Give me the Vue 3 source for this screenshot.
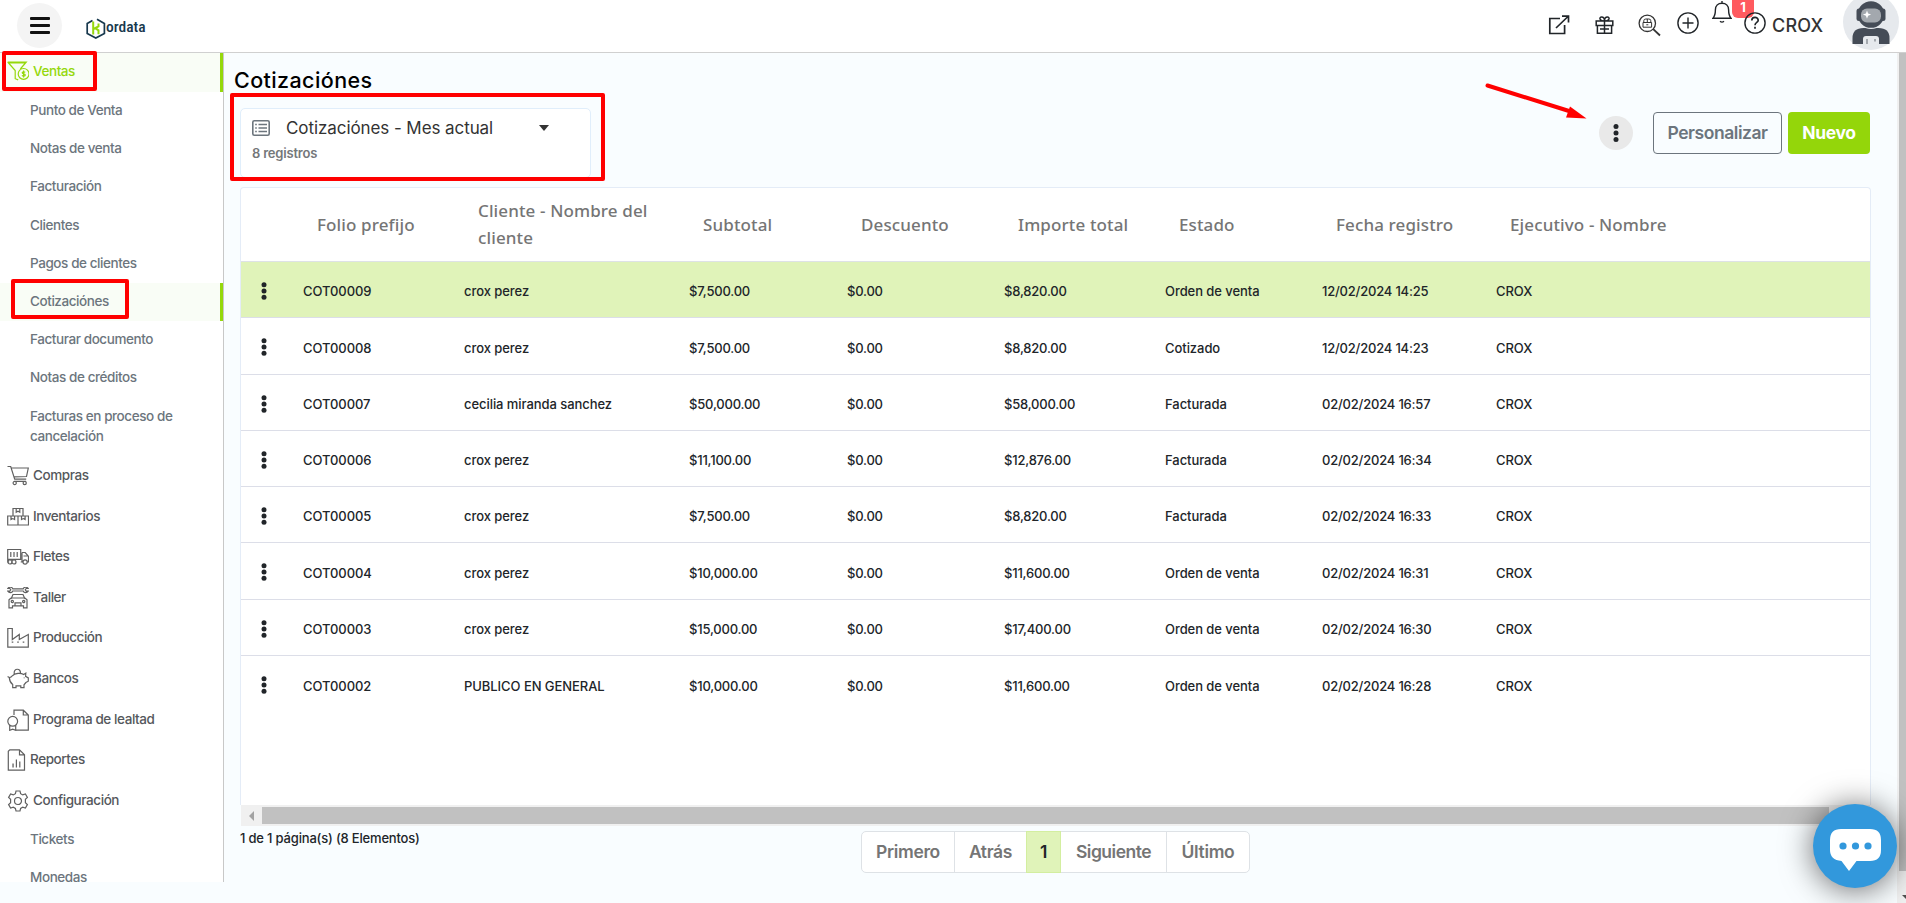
<script setup>
import { ref } from 'vue'

// stroke paths on a 22x22 grid
const icons = {
  ventas: 'M.7 1h18.6l-6 7M.7 1l7.5 8.5v8.2l3 1.2M1.5 2h17M22 12.9a5.4 5.4 0 1 1-10.8 0a5.4 5.4 0 1 1 10.8 0M18.2 11.3c-.5-.7-3-.9-3 .4c0 1.5 3.1.8 3.1 2.4c0 1.3-2.7 1.1-3.3.2M16.6 9.5v7',
  compras: 'M.5 1.5h3.2l4 12.7h11.5M4.5 3h16.8l-1.8 8.5l-12.5.4M7 16.3h12M9.3 18a1.6 1.6 0 1 1-3.2 0a1.6 1.6 0 1 1 3.2 0M19.3 18a1.6 1.6 0 1 1-3.2 0a1.6 1.6 0 1 1 3.2 0',
  inventarios: 'M.7 10h10.3v9H.7zM11 10h10.5v9H11zM6 2.5h10v7.5H6zM9.2 2.5v3.8l1.8-1l1.8 1v-3.8M4 10v3.6l1.8-1l1.8 1V10M14.5 10v3.6l1.8-1l1.8 1V10',
  fletes: 'M.7 3.5h13v9.8H.7zM3.8 6v5M7 6v5M10.2 6v5M.7 13.3v2.7h1.5M15.5 16h-1.8M15 6.5h3.2l3.3 3.8V16h-1M15 6.5V16M16.5 10h5M4.9 16a2 2 0 1 1-4 0a2 2 0 1 1 4 0M9 16a2 2 0 1 1-4 0a2 2 0 1 1 4 0M20.2 16a2.1 2.1 0 1 1-4.2 0a2.1 2.1 0 1 1 4.2 0',
  taller: 'M.8 1.5h2l1 1.3l-1 1.4h-2c1.4 2 4.2 1.8 5-.2h10.4c.8 2 3.6 2.2 5 .2h-2l-1-1.4l1-1.3h2c-1.4-2-4.2-1.7-5 .3H5.8c-.8-2-3.6-2.3-5-.3zM4 12l2-4.5h10L18 12M2 12.8l2-1.8h14l2 1.8v8h-3.5v-2h-11v2H2zM8 18.5v-2.7h6v2.7M6.4 14.5a1.1 1.1 0 1 1-2.2 0a1.1 1.1 0 1 1 2.2 0M17.8 14.5a1.1 1.1 0 1 1-2.2 0a1.1 1.1 0 1 1 2.2 0',
  produccion: 'M.8 1.5h4.5v11l7-5v5l9-5v12.7H.8zM4.7 15.2h1.6M10.2 15.2h1.6M15.7 15.2h1.6',
  bancos: 'M2.3 9.6c1.4 0 2.3-.5 3-1.8C8 4.8 14 4.8 16.7 6.5l2.1-1.4l-.2 3.2l2.7 1.6v3.3l-2.4 1.3l-1.9 2.3v2.8h-3.2v-1.8H9v1.8H5.7v-3.1C3.7 15 2.5 13 2.3 9.6L.6 8.5M7.2 5.8c-.9-6 7-6 6.2-.4M17.2 9.5v.8',
  lealtad: 'M7 6V1.2h9.3l5 4.8v15.2H8.2M16.3 1.2V6h5M10.6 12.3a4.9 4.9 0 1 1-9.8 0a4.9 4.9 0 1 1 9.8 0M2.7 16.5v4.8l3-1.2l3 1.2v-4.8',
  reportes: 'M2.8.8h9.7l5 5v15.4H1.3V2.3zM12.5.8v5h5M6 18.5v-4M9.4 18.5V10.5M12.8 18.5v-6M6.1 14.5v4',
  config: 'M9 1h4l.6 2.7l2.1 1.2l2.7-.9l2 3.4l-2 1.9v3.4l2 1.9l-2 3.4l-2.7-.8l-2.1 1.2L13 21H9l-.6-2.6l-2.1-1.2l-2.7.8l-2-3.4l2-1.9V9.3l-2-1.9l2-3.4l2.7.9l2.1-1.2zM14.5 11a3.5 3.5 0 1 1-7 0a3.5 3.5 0 1 1 7 0',
}

const menu = [
  { label: 'Ventas', icon: 'ventas', active: true },
  { label: 'Punto de Venta' },
  { label: 'Notas de venta' },
  { label: 'Facturación' },
  { label: 'Clientes' },
  { label: 'Pagos de clientes' },
  { label: 'Cotizaciónes', active: true },
  { label: 'Facturar documento' },
  { label: 'Notas de créditos' },
  { label: 'Facturas en proceso de cancelación' },
  { label: 'Compras', icon: 'compras' },
  { label: 'Inventarios', icon: 'inventarios' },
  { label: 'Fletes', icon: 'fletes' },
  { label: 'Taller', icon: 'taller' },
  { label: 'Producción', icon: 'produccion' },
  { label: 'Bancos', icon: 'bancos' },
  { label: 'Programa de lealtad', icon: 'lealtad' },
  { label: 'Reportes', icon: 'reportes' },
  { label: 'Configuración', icon: 'config' },
  { label: 'Tickets' },
  { label: 'Monedas' },
]

const columns = ['Folio prefijo', 'Cliente - Nombre del cliente', 'Subtotal', 'Descuento', 'Importe total', 'Estado', 'Fecha registro', 'Ejecutivo - Nombre']

const rows = [
  ['COT00009', 'crox perez', '$7,500.00', '$0.00', '$8,820.00', 'Orden de venta', '12/02/2024 14:25', 'CROX'],
  ['COT00008', 'crox perez', '$7,500.00', '$0.00', '$8,820.00', 'Cotizado', '12/02/2024 14:23', 'CROX'],
  ['COT00007', 'cecilia miranda sanchez', '$50,000.00', '$0.00', '$58,000.00', 'Facturada', '02/02/2024 16:57', 'CROX'],
  ['COT00006', 'crox perez', '$11,100.00', '$0.00', '$12,876.00', 'Facturada', '02/02/2024 16:34', 'CROX'],
  ['COT00005', 'crox perez', '$7,500.00', '$0.00', '$8,820.00', 'Facturada', '02/02/2024 16:33', 'CROX'],
  ['COT00004', 'crox perez', '$10,000.00', '$0.00', '$11,600.00', 'Orden de venta', '02/02/2024 16:31', 'CROX'],
  ['COT00003', 'crox perez', '$15,000.00', '$0.00', '$17,400.00', 'Orden de venta', '02/02/2024 16:30', 'CROX'],
  ['COT00002', 'PUBLICO EN GENERAL', '$10,000.00', '$0.00', '$11,600.00', 'Orden de venta', '02/02/2024 16:28', 'CROX'],
]
const selected = ref(0)
</script>

<template>
  <div class="app">
    <header class="topbar">
      <button class="burger"><i></i><i></i><i></i></button>
      <div class="logo">
        <svg width="20" height="21" viewBox="0 0 20 21" fill="none">
          <path d="M6.5 2.4L1.2 5.6v9.8l8.6 4.6l8.6-4.6V5.6L11 1.2" stroke="#17384d" stroke-width="1.7" />
          <path d="M7.2 3.5v13M12.5 5.5v3l-5 2.5M9.5 10.3l3 2v4" stroke="#95d80c" stroke-width="2" />
        </svg>
        <span>ordata</span>
      </div>
      <div class="tools">
        <svg class="t-link" width="22" height="20" viewBox="0 0 22 20" fill="none" stroke="#212529" stroke-width="1.7">
          <path d="M12 3.5H1.8v15h14.8V10M8 13L20 1.5M14 1.1h6.5v6.4" />
        </svg>
        <svg class="t-gift" width="19" height="19" viewBox="0 0 19 19" fill="none" stroke="#212529" stroke-width="1.5">
          <path d="M1.2 5h16.6v4.5H1.2zM2.4 9.5v7.8h14.2V9.5M9.5 5v12.3M9.5 5C4 5 4 1 6.6 1C8.6 1 9.5 3 9.5 5C9.5 3 10.4 1 12.4 1C15 1 15 5 9.5 5M5 13h9" />
        </svg>
        <svg class="t-find" width="23" height="23" viewBox="0 0 23 23" fill="none" stroke="#333" stroke-width="1.3">
          <circle cx="9.3" cy="9.3" r="8.2" />
          <path d="M15.2 15.2l6.8 6.3" stroke-width="1.8" />
          <path d="M5 8.5h8.6v4.7H5zM5.8 8.5V6.7q0-1.7 2-1.7h3q2 0 2 1.7v1.8M9.3 5v3.5M8.3 10.8h2" stroke-width="1" />
        </svg>
        <svg class="t-plus" width="22" height="22" viewBox="0 0 22 22" fill="none" stroke="#212529" stroke-width="1.4">
          <circle cx="11" cy="11" r="10.1" /><path d="M11 5.5v11M5.5 11h11" />
        </svg>
        <div class="bell">
          <svg width="20" height="24" viewBox="0 0 20 24" fill="none" stroke="#212529" stroke-width="1.4">
            <path d="M1 18.2c1.8-2 2.4-3.6 2.4-8.4C3.4 5.8 6 3.2 10 3.2s6.6 2.6 6.6 6.6c0 4.8.6 6.4 2.4 8.4zM10 3V1M8 21.3q2 1.6 4 0" />
          </svg>
          <span class="badge">1</span>
        </div>
        <svg class="t-help" width="22" height="22" viewBox="0 0 22 22" fill="none" stroke="#212529">
          <circle cx="11" cy="11" r="10.1" stroke-width="1.4" />
          <path d="M7.8 8.5C7.8 4.3 14.2 4.4 14.2 8.2C14.2 10.5 11 10.3 11 13.2M11 14.8v2" stroke-width="1.7" />
        </svg>
        <span class="user">CROX</span>
        <svg class="avatar" width="56" height="50" viewBox="0 0 56 50">
          <circle cx="28" cy="22" r="28" fill="#e6e9ed" />
          <path d="M9.5 44V38q0-10 11-10h15q11 0 11 10v6z" fill="#454c57" />
          <circle cx="28" cy="14.5" r="14.5" fill="#e6e9ed" />
          <circle cx="28" cy="14.5" r="13.3" fill="#454c57" />
          <rect x="13.5" y="8.5" width="29" height="12.5" rx="2.5" fill="#454c57" />
          <rect x="18" y="8.5" width="20" height="14" rx="6" fill="#a3a8ae" />
          <path d="M24 10.5l1.1 3l3 1.1l-3 1.1l-1.1 3l-1.1-3l-3-1.1l3-1.1z" fill="#fff" />
          <path d="M20 44v-5q0-3 3-3h10q3 0 3 3v5z" fill="#e6e9ed" />
          <path d="M24 39v5M32 39v2.5" stroke="#a3a8ae" stroke-width="2" />
        </svg>
      </div>
    </header>

    <div class="body">
      <nav class="sidebar">
        <a v-for="item in menu" :key="item.label" :class="['item', item.icon ? 'group' : 'sub', { active: item.active }]">
          <svg v-if="item.icon" :width="item.icon === 'reportes' ? 19 : 22" height="22" fill="none" stroke="currentColor" stroke-width="1.2">
            <path :d="icons[item.icon]" />
          </svg>
          <span>{{ item.label }}</span>
        </a>
      </nav>

      <main class="content">
        <h1>Cotizaciónes</h1>
        <div class="head">
          <div class="view">
            <div class="view-row">
              <svg width="18" height="16" viewBox="0 0 18 16" fill="none" stroke="#6c757d">
                <rect x=".8" y=".8" width="16.4" height="14.4" rx="1.5" stroke-width="1.6" />
                <path d="M6.5 4.5H15M6.5 8H15M6.5 11.5H15M3.2 4.5h1.6M3.2 8h1.6M3.2 11.5h1.6" stroke-width="1.4" />
              </svg>
              <span>Cotizaciónes - Mes actual</span>
              <i class="caret"></i>
            </div>
            <small>8 registros</small>
          </div>
          <div class="actions">
            <button class="more">
              <svg width="6" height="18" fill="#212529"><circle cx="3" cy="2.6" r="2.5" /><circle cx="3" cy="9" r="2.5" /><circle cx="3" cy="15.4" r="2.5" /></svg>
            </button>
            <button class="btn outline">Personalizar</button>
            <button class="btn primary">Nuevo</button>
          </div>
        </div>

        <div class="table">
          <div class="tr th">
            <span></span>
            <span v-for="c in columns" :key="c">{{ c }}</span>
          </div>
          <div v-for="(r, i) in rows" :key="r[0]" class="tr td" :class="{ selected: i === selected }" @click="selected = i">
            <svg width="6" height="18" fill="#212529"><circle cx="3" cy="2.8" r="2.5" /><circle cx="3" cy="9" r="2.5" /><circle cx="3" cy="15.2" r="2.5" /></svg>
            <span v-for="(v, j) in r" :key="j" :class="{ word: [0, 1, 5, 7].includes(j) }">{{ v }}</span>
          </div>
        </div>
        <div class="hscroll"><i></i><b></b></div>

        <footer>
          <p>1 de 1 página(s) (8 Elementos)</p>
          <div class="pager">
            <a class="p1">Primero</a>
            <a class="p2">Atrás</a>
            <a class="current">1</a>
            <a class="p4">Siguiente</a>
            <a class="p5">Último</a>
          </div>
        </footer>
      </main>

      <div class="vscroll"><b></b><i></i></div>
    </div>

    <!-- annotations over the page -->
    <div class="mark mark-ventas"></div>
    <div class="mark mark-cotiz"></div>
    <div class="mark mark-view"></div>
    <svg class="arrow" width="104" height="40">
      <path d="M4.5 5.5L86 31" stroke="#f00" stroke-width="4" stroke-linecap="round" />
      <path d="M103.5 38.500L87 26.500L83 37.500z" fill="#f00" />
    </svg>

    <button class="chat">
      <svg width="52" height="44" viewBox="0 0 52 44">
        <path d="M11 0h29q11 0 11 11v10q0 11-11 11H26.5L19 42L11.5 32Q0 31 0 21V11Q0 0 11 0z" fill="#fff" />
        <circle cx="13" cy="17" r="3.6" fill="#3298dc" /><circle cx="25.5" cy="17" r="3.6" fill="#3298dc" /><circle cx="38" cy="17" r="3.6" fill="#3298dc" />
      </svg>
    </button>
  </div>
</template>

<style>
body {
  margin: 0;
  overflow: hidden;
}
</style>

<style scoped>
* {
  box-sizing: border-box;
}
.app {
  position: relative;
  width: 1906px;
  height: 903px;
  overflow: hidden;
  background: #f9fdff;
  color: #212529;
  font-family: Inter, 'Liberation Sans', sans-serif;
  font-weight: 500;
}
button {
  border: 0;
  padding: 0;
  font: inherit;
}
svg {
  display: block;
  flex: none;
}
.topbar {
  display: flex;
  height: 53px;
  background: #fff;
  border-bottom: 1px solid #d0d0d0;
}
.burger {
  display: flex;
  flex-direction: column;
  align-items: center;
  justify-content: center;
  gap: 4px;
  width: 45px;
  height: 45px;
  margin: 3px 0 0 17px;
  border-radius: 50%;
  background: #f4f4f4;
}
.burger i {
  width: 20px;
  height: 3px;
  border-radius: 1px;
  background: #111;
}
.logo {
  display: flex;
  margin: 18px 0 0 24px;
  color: #17384d;
  font: 500 15.5px/18px Roboto, sans-serif;
}
.logo span {
  width: 42px;
  font-stretch: condensed;
  letter-spacing: 0;
}
.tools {
  display: flex;
  align-items: flex-start;
  margin-left: auto;
}
.t-link { margin: 15px 25px 0 0; }
.t-gift { margin: 16px 24px 0 0; }
.t-find { margin: 14px 16px 0 0; }
.t-plus { margin: 12px 13px 0 0; }
.bell {
  position: relative;
  width: 32px;
}
.badge {
  position: absolute;
  left: 20px;
  top: -5px;
  width: 22px;
  height: 23px;
  border-radius: 6px;
  background: #ff5a5f;
  color: #fff;
  font-size: 13px;
  font-weight: 700;
  line-height: 25px;
  text-align: center;
}
.t-help {
  position: relative;
  margin-top: 12px;
}
.user {
  width: 71px;
  margin: 14px 0 0 6px;
  font-size: 18px;
  line-height: 24px;
  letter-spacing: 0.2px;
  color: #333;
}
.avatar {
  margin-right: 7px;
}
.body {
  display: flex;
  height: 850px;
}
.sidebar {
  width: 224px;
  height: 829px;
  overflow: hidden;
  background: #fff;
  border-right: 1px solid #c8c8c8;
  font-size: 13.5px;
  letter-spacing: -0.42px;
}
.item {
  display: flex;
  line-height: 20px;
}
.sub {
  min-height: 38.2px;
  padding: 8px 30px 10px;
  color: #6c757d;
}
.group {
  height: 40.6px;
  padding: 9.5px 7px;
  gap: 4px;
  color: #55585c;
}
.group svg {
  color: #606060;
}
.group:first-child {
  height: 39px;
  padding-top: 7.5px;
}
.item.active {
  border-right: 3px solid #95d80c;
  background: #f9fdf6;
}
.group.active,
.group.active svg {
  color: #95d80c;
}
.content {
  display: flex;
  flex-direction: column;
  width: 1646px;
  margin-left: 16px;
}
h1 {
  margin: 11px 0 0 -6px;
  color: #000;
  font-size: 21.5px;
  font-weight: 500;
  line-height: 32px;
  letter-spacing: 0.4px;
}
.head {
  display: flex;
  justify-content: space-between;
  margin: 12px 0 0;
  width: 1630px;
}
.view {
  width: 351px;
  height: 70px;
  padding: 9px 11px;
  border: 1px solid #e0eefb;
  border-radius: 5px;
  background: #fff;
}
.view-row {
  display: flex;
  align-items: center;
  height: 20px;
}
.view-row span {
  width: 253px;
  margin-left: 16px;
  color: #333;
  font-size: 17px;
  font-weight: 400;
  letter-spacing: -0.08px;
}
.caret {
  border: 5.5px solid transparent;
  border-top: 6.5px solid #333;
  border-bottom: 0;
}
.view small {
  display: block;
  margin-top: 7px;
  color: #74777a;
  font-size: 13px;
  font-weight: 600;
  line-height: 17px;
  letter-spacing: -0.2px;
}
.actions {
  display: flex;
  align-items: center;
  height: 42px;
  margin-top: 4px;
}
.more {
  display: flex;
  align-items: center;
  justify-content: center;
  width: 34px;
  height: 34px;
  margin-right: 20px;
  border-radius: 50%;
  background: #e9e9e9;
}
.btn {
  height: 42px;
  padding-bottom: 2px;
  border-radius: 4px;
  font-size: 17.5px;
}
.outline {
  width: 129px;
  margin-right: 6px;
  border: 1px solid #6c757d;
  background: none;
  color: #6c757d;
  font-weight: 600;
  letter-spacing: -0.45px;
}
.primary {
  width: 82px;
  background: #94d60a;
  color: #fff;
  font-weight: 700;
  letter-spacing: -0.35px;
}
.table {
  width: 1631px;
  height: 618px;
  margin-top: 9px;
  border: 1px solid #e4ecf7;
  border-bottom: 0;
  border-radius: 4px 4px 0 0;
  background: #fff;
}
.tr {
  display: grid;
  grid-template-columns: 62px 161px 225px 158px 157px 161px 157px 174px 1fr;
  align-items: center;
}
.th {
  height: 74px;
  padding-bottom: 1px;
  border-bottom: 1px solid #dee2e6;
  color: #757575;
  font: 500 17px/27px 'Noto Sans', 'Open Sans', sans-serif;
  letter-spacing: 0.12px;
}
.th span {
  padding: 0 14px;
}
.td {
  height: 56.28px;
  border-bottom: 1px solid #dcdee8;
  font-size: 13px;
  letter-spacing: -0.2px;
}
.td span {
  padding-top: 3.5px;
}
.td .word {
  letter-spacing: -0.06px;
}
.td svg {
  margin: 3px 0 0 20px;
}
.td:last-child {
  border-bottom: 0;
}
.selected {
  background: #e0f3b9;
}
.hscroll {
  display: flex;
  align-items: center;
  width: 1629px;
  height: 21px;
  margin-left: 1px;
  background: #f0f0f0;
}
.hscroll i {
  margin: 0 8px;
  border: 5px solid transparent;
  border-right-color: #a3a3a3;
  border-left: 0;
}
.hscroll b {
  width: 1567px;
  height: 17px;
  background: #c1c1c1;
}
footer {
  display: flex;
}
footer p {
  width: 621px;
  margin: 3px 0 0;
  font-size: 13px;
  line-height: 18px;
  letter-spacing: -0.18px;
}
.pager {
  display: flex;
  height: 42px;
  margin-top: 5px;
  border: 1px solid #dee2e6;
  border-radius: 5px;
  background: #fff;
  color: #757575;
  font-size: 17.5px;
  font-weight: 600;
  line-height: 40px;
  letter-spacing: -0.35px;
  text-align: center;
}
.p1 { width: 93px; border-right: 1px solid #dee2e6; }
.p2 { width: 71px; }
.p4 { width: 106px; border-right: 1px solid #dee2e6; letter-spacing: -0.5px; }
.p5 { width: 82px; }
.current {
  width: 35px;
  height: 42px;
  margin-top: -1px;
  border: 1px solid #d3eea0;
  background: #e0f3b9;
  color: #212529;
}
.vscroll {
  display: flex;
  flex-direction: column;
  align-items: flex-end;
  width: 9px;
  margin-left: auto;
  background: #f0f0f0;
}
.vscroll b {
  width: 7px;
  height: 818px;
  background: #c1c1c1;
}
.vscroll i {
  margin: 24px -4px 0 0;
  border: 4px solid transparent;
  border-top-color: #505050;
  border-bottom: 0;
}
.mark {
  position: absolute;
  border: 4px solid #f00;
  border-radius: 2px;
}
.mark-ventas {
  left: 2px;
  top: 51px;
  width: 95px;
  height: 40px;
}
.mark-cotiz {
  left: 11px;
  top: 279px;
  width: 118px;
  height: 40px;
}
.mark-view {
  left: 230px;
  top: 93px;
  width: 375px;
  height: 88px;
}
.arrow {
  position: absolute;
  left: 1483px;
  top: 80px;
}
.chat {
  position: absolute;
  left: 1813px;
  top: 804px;
  display: flex;
  align-items: flex-start;
  width: 84px;
  height: 84px;
  padding: 25px 0 0 17px;
  border-radius: 50%;
  background: #3298dc;
  box-shadow: 0 2px 32px rgba(0, 0, 0, 0.6);
}
</style>
